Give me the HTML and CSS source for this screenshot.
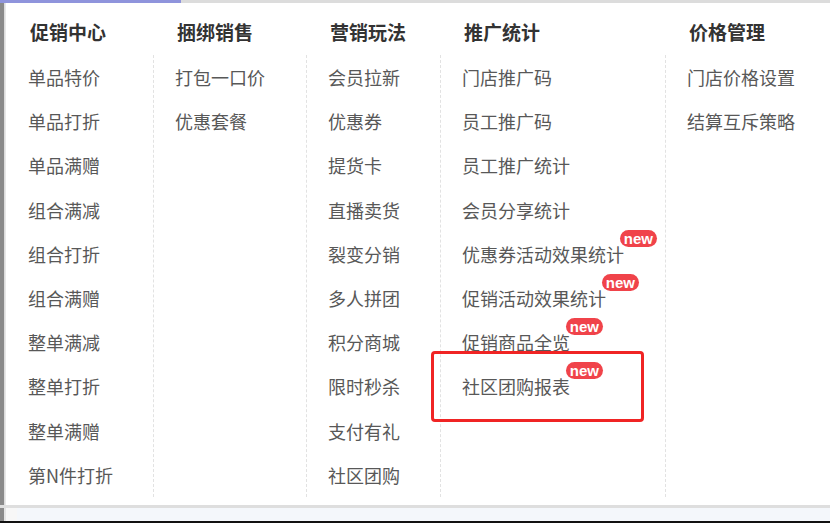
FILE: index.html
```html
<!DOCTYPE html>
<html lang="zh">
<head>
<meta charset="utf-8">
<link rel="stylesheet" href="styles.css">
</head>
<body>
<div class="frame">
  <div class="topbar"><div class="topbar-active"></div></div>
  <div class="main">
    <div class="sidebar-edge"></div>
    <div class="menu">
      <div class="col col1">
        <div class="head">促销中心</div>
        <ul class="list">
          <li>单品特价</li><li>单品打折</li><li>单品满赠</li><li>组合满减</li><li>组合打折</li>
          <li>组合满赠</li><li>整单满减</li><li>整单打折</li><li>整单满赠</li><li>第N件打折</li>
        </ul>
      </div>
      <div class="col col2">
        <div class="head">捆绑销售</div>
        <ul class="list">
          <li>打包一口价</li><li>优惠套餐</li>
        </ul>
      </div>
      <div class="col col3">
        <div class="head">营销玩法</div>
        <ul class="list">
          <li>会员拉新</li><li>优惠券</li><li>提货卡</li><li>直播卖货</li><li>裂变分销</li>
          <li>多人拼团</li><li>积分商城</li><li>限时秒杀</li><li>支付有礼</li><li>社区团购</li>
        </ul>
      </div>
      <div class="col col4">
        <div class="head">推广统计</div>
        <ul class="list">
          <li>门店推广码</li><li>员工推广码</li><li>员工推广统计</li><li>会员分享统计</li>
          <li><span class="label">优惠券活动效果统计<span class="badge">new</span></span></li>
          <li><span class="label">促销活动效果统计<span class="badge">new</span></span></li>
          <li><span class="label">促销商品全览<span class="badge">new</span></span></li>
          <li class="marked"><span class="label">社区团购报表<span class="badge">new</span></span><span class="highlight"></span></li>
        </ul>
      </div>
      <div class="col col5">
        <div class="head">价格管理</div>
        <ul class="list">
          <li>门店价格设置</li><li>结算互斥策略</li>
        </ul>
      </div>
    </div>
  </div>
  <div class="bottom"><div class="bottom-edge"></div><div class="bottom-fill"></div></div>
  <div class="blackline"></div>
</div>
</body>
</html>
```
FILE: styles.css
```css
* { box-sizing: border-box; }
html, body { margin: 0; padding: 0; }
body {
  width: 830px;
  height: 523px;
  overflow: hidden;
  background: #ffffff;
  font-family: "Noto Sans CJK SC", "Noto Sans", sans-serif;
}
.frame {
  display: flex;
  flex-direction: column;
  height: 523px;
}
.topbar {
  height: 3px;
  background: #dcdcdc;
  display: flex;
}
.topbar-active {
  width: 181px;
  background: #8f94dc;
}
.main {
  display: flex;
  height: 502px;
}
.sidebar-edge {
  width: 6px;
  background: linear-gradient(to right, #8a8a8a 0, #8a8a8a 4px, #d6d6d6 4px, #eeeeee 6px);
}
.menu {
  display: flex;
  flex: 1;
  padding-top: 7px;
}
.col { display: flex; flex-direction: column; }
.col1 { width: 147px; }
.col2 { width: 153px; }
.col3 { width: 134px; }
.col4 { width: 225px; }
.col5 { flex: 1; }
.head {
  height: 45px;
  line-height: 44px;
  padding-left: 24px;
  font-size: 19px;
  font-weight: bold;
  color: #333333;
}
.list {
  list-style: none;
  margin: 0;
  padding: 0;
  height: 442px;
  border-left: 1px dashed #e2e2e2;
}
.col1 .list { border-left-color: transparent; }
.list li {
  position: relative;
  height: 44.2px;
  line-height: 44.2px;
  padding-left: 21px;
  font-size: 18px;
  color: #585858;
  white-space: nowrap;
}
.label { position: relative; }
.badge {
  position: absolute;
  right: -33px;
  top: -11px;
  height: 17px;
  line-height: 17px;
  padding: 0 4px;
  border-radius: 9px;
  background: #f0434a;
  color: #ffffff;
  font-family: "Liberation Sans", Arial, sans-serif;
  font-size: 15px;
  font-weight: bold;
}
.highlight {
  position: absolute;
  left: -10px;
  top: -13px;
  width: 213px;
  height: 71px;
  border: 3px solid #f02424;
  border-radius: 4px;
}
.bottom {
  display: flex;
  height: 16px;
  border-top: 3px solid #dedede;
}
.bottom-edge {
  width: 17px;
  background: linear-gradient(to right, #8a8a8a 0, #8a8a8a 4px, #e4e4e4 4px, #e4e4e4 6px, #f7f7f7 6px);
}
.bottom-fill {
  flex: 1;
  background: #f4f7fb;
}
.blackline {
  height: 2px;
  background: #111111;
}
```
